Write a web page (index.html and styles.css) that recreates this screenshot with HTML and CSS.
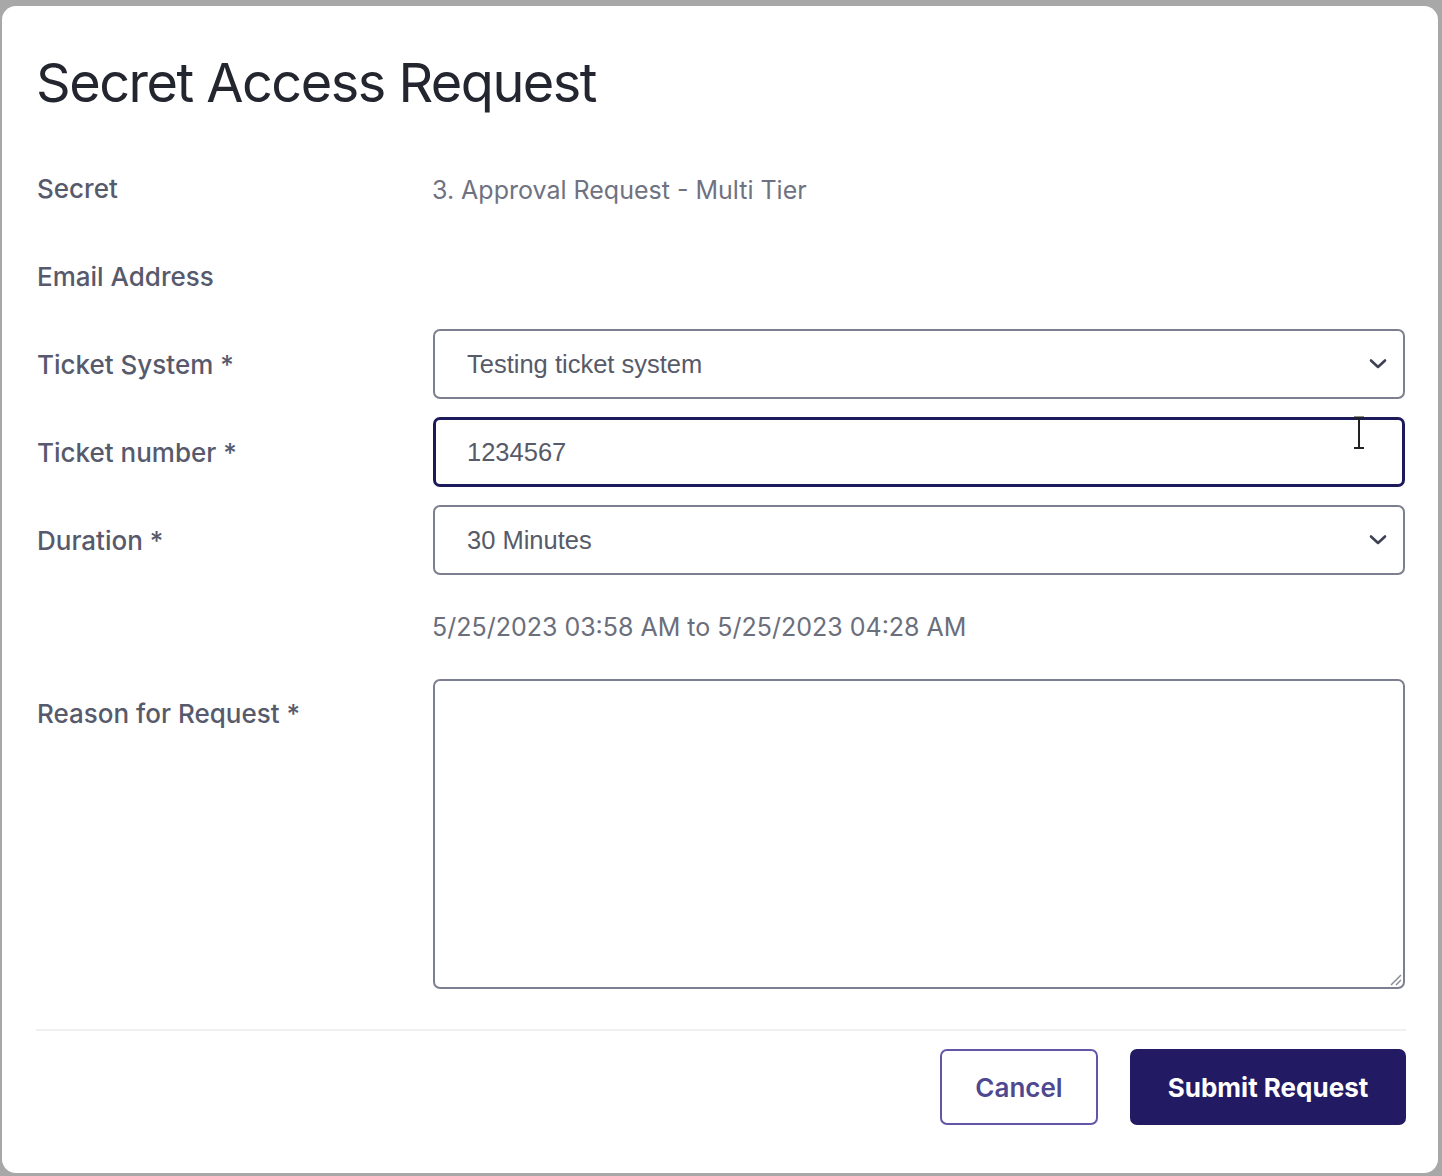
FILE: index.html
```html
<!DOCTYPE html>
<html lang="en">
<head>
<meta charset="utf-8">
<title>Secret Access Request</title>
<link rel="stylesheet" href="styles.css">
</head>
<body>
<div class="modal">
  <h1 class="title">Secret Access Request</h1>
  <div class="form">
    <div class="label">Secret</div>
    <div class="value">3. Approval Request - Multi Tier</div>

    <div class="label">Email Address</div>
    <div class="value"></div>

    <div class="label">Ticket System *</div>
    <div class="field select">
      <span class="field-text">Testing ticket system</span>
      <svg class="chevron" width="20" height="12" viewBox="0 0 20 12"><path d="M3 2.5 L10 9 L17 2.5" fill="none" stroke="#3f4154" stroke-width="2.6" stroke-linecap="round" stroke-linejoin="round"/></svg>
    </div>

    <div class="label">Ticket number *</div>
    <div class="field focused">
      <span class="field-text">1234567</span>
      <svg class="ibeam" width="14" height="34" viewBox="0 0 14 34"><path d="M2 1.5 H12 M7 1.5 V32 M2 32 H12" fill="none" stroke="#222" stroke-width="2"/></svg>
    </div>

    <div class="label">Duration *</div>
    <div class="field select">
      <span class="field-text">30 Minutes</span>
      <svg class="chevron" width="20" height="12" viewBox="0 0 20 12"><path d="M3 2.5 L10 9 L17 2.5" fill="none" stroke="#3f4154" stroke-width="2.6" stroke-linecap="round" stroke-linejoin="round"/></svg>
    </div>

    <div class="label"></div>
    <div class="value date">5/25/2023 03:58 AM to 5/25/2023 04:28 AM</div>

    <div class="label top">Reason for Request *</div>
    <div class="textarea">
      <svg class="grip" width="16" height="16" viewBox="0 0 16 16"><path d="M15 5 L5 15 M15 10 L10 15" fill="none" stroke="#8a8c99" stroke-width="1.5"/></svg>
    </div>
  </div>
  <div class="footer">
    <button class="btn btn-outline">Cancel</button>
    <button class="btn btn-primary">Submit Request</button>
  </div>
</div>
</body>
</html>
```

FILE: styles.css
```css
html, body {
  margin: 0;
  padding: 0;
}
body {
  background: #a8a8a8;
  font-family: Inter, "Noto Sans", sans-serif;
  width: 1442px;
  height: 1176px;
  overflow: hidden;
}
.modal {
  box-sizing: border-box;
  margin: 6px 0 0 2px;
  width: 1436px;
  height: 1167px;
  background: #ffffff;
  border-radius: 14px;
  padding: 44px 33px 0 34px;
  display: flex;
  flex-direction: column;
}
.title {
  margin: 0 0 38px 0;
  font-size: 54px;
  line-height: 65px;
  font-weight: 400;
  color: #23252f;
  letter-spacing: -1.5px;
}
.form {
  display: grid;
  grid-template-columns: 397px 1fr;
  grid-template-rows: 70px 70px 70px 70px 70px 68px 310px;
  row-gap: 18px;
}
.label {
  font-size: 26px;
  line-height: 70px;
  color: #575a6c;
  font-weight: 500;
  padding-left: 1px;
  position: relative;
  top: 1px;
}
.label.top {
  align-self: start;
  top: 0;
}
.value {
  font-size: 25px;
  line-height: 70px;
  color: #6f7281;
  margin-left: -1px;
  position: relative;
  top: 2px;
}
.value.date {
  line-height: 68px;
  color: #6b6e7b;
  top: 0;
}
.field {
  box-sizing: border-box;
  height: 70px;
  border: 2px solid #7c7f90;
  border-radius: 7px;
  padding: 0 15px 0 32px;
  display: flex;
  align-items: center;
  position: relative;
}
.field.focused {
  border: 3px solid #1d1a5c;
  padding-left: 31px;
}
.field-text {
  flex: 1;
  font-family: "Liberation Sans", Arial, sans-serif;
  font-size: 25.5px;
  color: #575a68;
}
.chevron {
  flex: none;
}
.ibeam {
  position: absolute;
  right: 36px;
  top: -4px;
}
.textarea {
  box-sizing: border-box;
  height: 310px;
  border: 2px solid #7c7f90;
  border-radius: 7px;
  position: relative;
}
.grip {
  position: absolute;
  right: 1px;
  bottom: 1px;
}
.footer {
  margin-top: 40px;
  border-top: 2px solid #f0f0f2;
  padding-top: 18px;
  display: flex;
  justify-content: flex-end;
  gap: 32px;
  margin-right: -1px;
}
.btn {
  box-sizing: border-box;
  height: 76px;
  border-radius: 7px;
  font-family: Inter, "Noto Sans", sans-serif;
  font-size: 26px;
  font-weight: 700;
  cursor: pointer;
}
.btn-outline {
  width: 158px;
  background: #ffffff;
  border: 2px solid #6257a6;
  color: #4e4890;
  font-weight: 600;
}
.btn-primary {
  width: 276px;
  background: #231a64;
  border: none;
  color: #ffffff;
}
```
